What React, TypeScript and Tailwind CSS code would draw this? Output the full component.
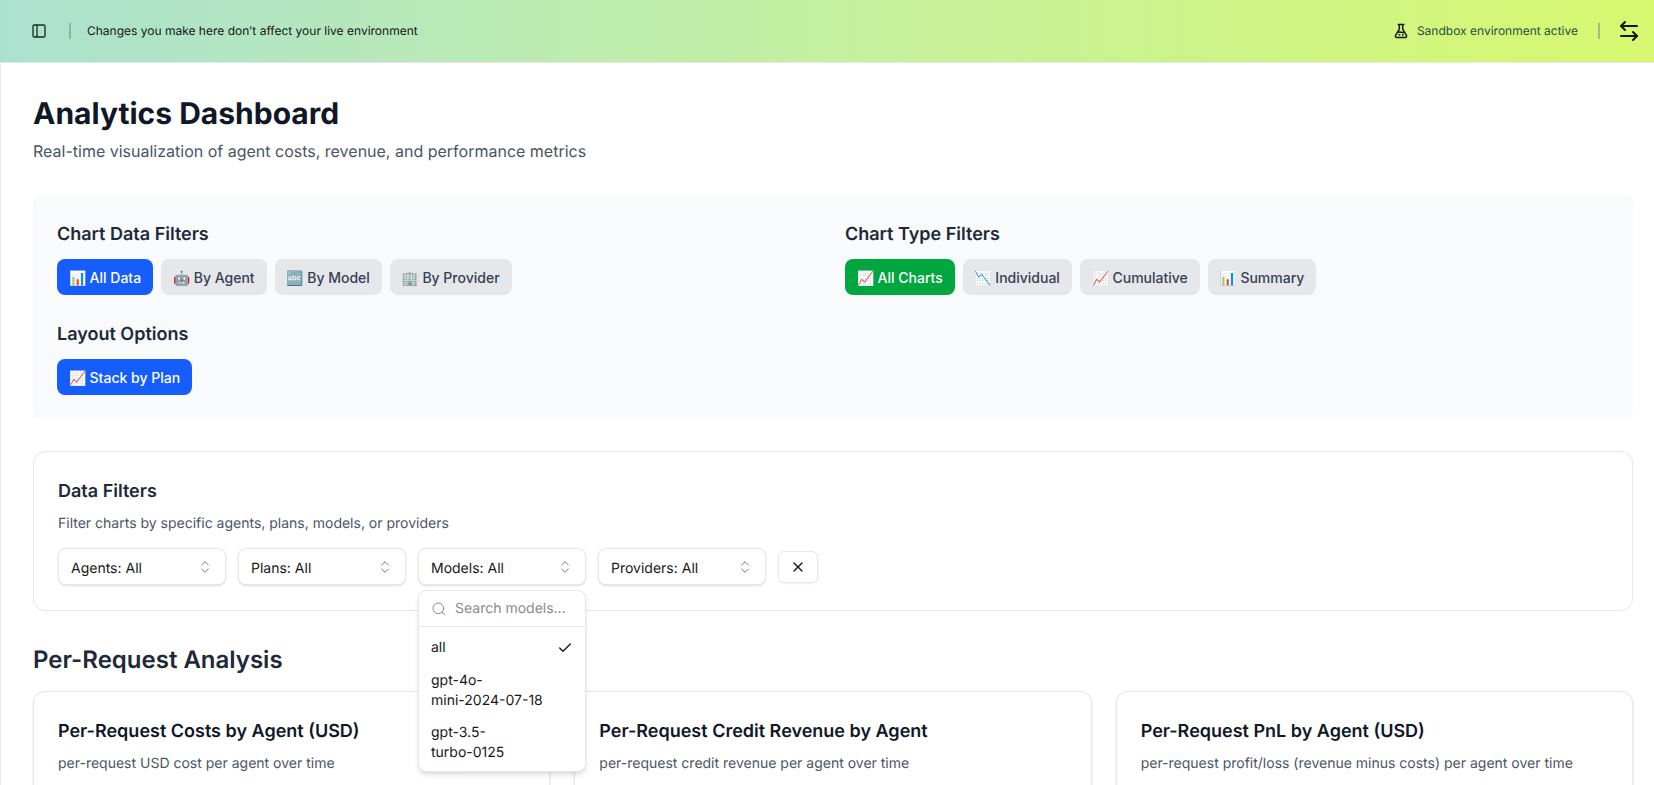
import { ArrowLeftRight, Check, ChevronsUpDown, PanelLeft, Search, X } from "lucide-react";

const font = { fontFamily: '"Inter", "Noto Color Emoji", sans-serif' };

function Pill({ emoji, label, tone }: { emoji: string; label: string; tone?: "blue" | "green" }) {
  const color =
    tone === "blue"
      ? "bg-[#155dfc] text-white"
      : tone === "green"
        ? "bg-[#00a63e] text-white"
        : "bg-[#e5e7eb] text-[#364153]";
  return (
    <button className={`h-9 px-3 pt-px rounded-lg text-sm font-medium whitespace-nowrap ${color}`}>
      <span className="tracking-[-0.6px]">{emoji}</span> {label}
    </button>
  );
}

function Group({ title, children }: { title: string; children: React.ReactNode }) {
  return (
    <div>
      <h3 className="text-lg leading-[32px] font-semibold text-[#1e2939] mb-2">{title}</h3>
      <div className="flex gap-2">{children}</div>
    </div>
  );
}

function Select({ label }: { label: string }) {
  return (
    <div className="w-[168px] h-[37px] px-3 flex items-center justify-between rounded-lg border border-[#e5e7eb] bg-white shadow-sm text-sm text-[#171717]">
      <span className="pt-[4px]">{label}</span>
      <ChevronsUpDown className="w-4 h-4 text-[#737373]" strokeWidth={1.5} />
    </div>
  );
}

function ChartCard({ title, desc }: { title: string; desc: string }) {
  return (
    <div className="rounded-xl border border-[#e5e7eb] bg-white shadow-sm p-6 h-[200px]">
      <h3 className="text-lg leading-[32px] font-semibold text-[#101828]">{title}</h3>
      <p className="text-sm text-[#4a5565] mt-[6px]">{desc}</p>
    </div>
  );
}

function Flask() {
  return (
    <svg viewBox="0 0 16 16" className="w-4 h-4 text-[#171717]" fill="none" stroke="currentColor" strokeWidth="1.5" strokeLinecap="round" strokeLinejoin="round">
      <path d="M5.2 1.6h5.6" />
      <path d="M6.3 1.8v4.4L2.6 12.4c-.6 1 .1 2.1 1.2 2.1h8.4c1.1 0 1.8-1.1 1.2-2.1L9.7 6.2V1.8" />
      <path d="M4.6 9.3c2-.9 4.7.6 6.8 0" />
      <circle cx="6.2" cy="11.8" r=".6" fill="currentColor" strokeWidth="0.6" />
      <circle cx="9.6" cy="12" r=".6" fill="currentColor" strokeWidth="0.6" />
    </svg>
  );
}

export default function App() {
  return (
    <div className="h-screen overflow-hidden bg-white [text-rendering:geometricPrecision]" style={font}>
      <header className="h-[63px] flex items-center justify-between border-b border-[#e5e7eb] pl-[31px] pr-[13px] bg-[linear-gradient(90deg,#abe1d0_0%,#c4f0a0_50%,#d7f86f_100%)]">
        <div className="flex items-center">
          <PanelLeft className="w-4 h-4 text-[#1d2b28]" />
          <div className="w-0.5 h-4 bg-[#8bb5a9] ml-[22px] mr-4" />
          <span className="text-xs text-[#171717]">Changes you make here don’t affect your live environment</span>
        </div>
        <div className="flex items-center">
          <Flask />
          <span className="text-xs text-[#2a4f4a] ml-2">Sandbox environment active</span>
          <div className="w-0.5 h-4 bg-[#9dbf84] ml-5 mr-[17px]" />
          <ArrowLeftRight className="w-6 h-6 text-[#171717]" />
        </div>
      </header>
      <main className="border-l border-[#e5e7eb] pl-8 pr-[21px] pt-8">
        <h1 className="text-3xl leading-[38px] font-bold text-[#101828]">Analytics Dashboard</h1>
        <p className="text-base text-[#4a5565] mt-[6px]">Real-time visualization of agent costs, revenue, and performance metrics</p>

        <section className="mt-8 rounded-lg bg-[#f9fafb] p-6">
          <div className="grid grid-cols-2 gap-6">
            <Group title="Chart Data Filters">
              <Pill emoji="📊" label="All Data" tone="blue" />
              <Pill emoji="🤖" label="By Agent" />
              <Pill emoji="🔤" label="By Model" />
              <Pill emoji="🏢" label="By Provider" />
            </Group>
            <Group title="Chart Type Filters">
              <Pill emoji="📈" label="All Charts" tone="green" />
              <Pill emoji="📉" label="Individual" />
              <Pill emoji="📈" label="Cumulative" />
              <Pill emoji="📊" label="Summary" />
            </Group>
            <Group title="Layout Options">
              <Pill emoji="📈" label="Stack by Plan" tone="blue" />
            </Group>
          </div>
        </section>

        <section className="mt-8 rounded-xl border border-[#e5e7eb] bg-white p-6 h-[160px]">
          <h3 className="text-lg leading-[32px] font-semibold text-[#1e2939]">Data Filters</h3>
          <p className="text-sm text-[#4a5565] mt-[6px]">Filter charts by specific agents, plans, models, or providers</p>
          <div className="flex items-center gap-3 mt-[14px]">
            <Select label="Agents: All" />
            <Select label="Plans: All" />
            <div className="relative">
              <Select label="Models: All" />
              <div className="absolute z-10 left-0 top-[42px] w-[168px] rounded-lg border border-[#e5e7eb] bg-white shadow-md text-sm text-[#171717]">
                <div className="h-9 flex items-center gap-2 px-3 border-b border-[#e5e7eb] text-[#8a8a8a]">
                  <Search className="w-4 h-4 shrink-0" strokeWidth={1.5} />
                  <span>Search models...</span>
                </div>
                <div className="px-1 pt-[5px] pb-[3px]">
                  <div className="px-2 py-1.5 flex items-center justify-between">
                    <span>all</span>
                    <Check className="w-4 h-4" />
                  </div>
                  <div className="px-2 pt-[7px] pb-[5px]">gpt-4o-<br />mini-2024-07-18</div>
                  <div className="px-2 pt-[7px] pb-[5px]">gpt-3.5-<br />turbo-0125</div>
                </div>
              </div>
            </div>
            <Select label="Providers: All" />
            <button className="w-10 h-8 flex items-center justify-center rounded-md border border-[#e5e7eb] bg-white shadow-xs">
              <X className="w-4 h-4 text-[#171717]" />
            </button>
          </div>
        </section>

        <h2 className="text-2xl leading-[34px] font-semibold text-[#1e2939] mt-8 mb-[14px]">Per-Request Analysis</h2>
        <div className="grid grid-cols-3 gap-6">
          <ChartCard title="Per-Request Costs by Agent (USD)" desc="per-request USD cost per agent over time" />
          <ChartCard title="Per-Request Credit Revenue by Agent" desc="per-request credit revenue per agent over time" />
          <ChartCard title="Per-Request PnL by Agent (USD)" desc="per-request profit/loss (revenue minus costs) per agent over time" />
        </div>
      </main>
    </div>
  );
}
